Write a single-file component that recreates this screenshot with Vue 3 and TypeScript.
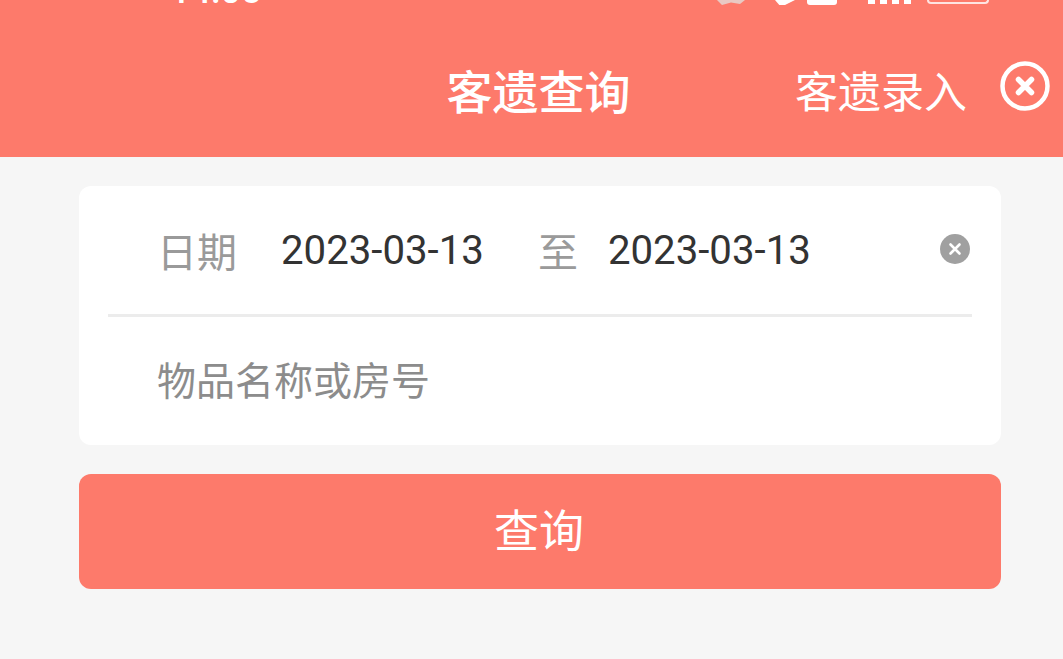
<script setup lang="ts">
const title = '客遗查询'
</script>

<template>
  <div class="page">
    <header class="header">
      <div class="status">
        <span class="time">14:05</span>
        <div class="status-icons">
          <svg class="bell" width="28" height="6" viewBox="0 0 28 6"><path d="M0 0 H28 L23 4 L14 2.5 L5 5Z" fill="#e9c9c3"/></svg>
          <svg class="wifi" width="20" height="7" viewBox="0 0 20 7"><path d="M0 0H20L6 7Z" fill="#fff"/></svg>
          <span class="sim"></span>
          <span class="bars"><i></i><i></i><i></i><i></i></span>
          <span class="battery"></span>
        </div>
      </div>
      <div class="nav">
        <h1 class="title">{{ title }}</h1>
        <span class="entry">客遗录入</span>
        <svg class="close" width="52" height="52" viewBox="0 0 52 52">
          <circle cx="26" cy="26" r="22.5" fill="none" stroke="#fff" stroke-width="4.5"/>
          <path d="M19.5 19.5 L32.5 32.5 M32.5 19.5 L19.5 32.5" stroke="#fff" stroke-width="5.5" stroke-linecap="round"/>
        </svg>
      </div>
    </header>
    <main class="content">
      <section class="card">
        <div class="row date-row">
          <span class="label">日期</span>
          <span class="date">2023-03-13</span>
          <span class="to">至</span>
          <span class="date">2023-03-13</span>
          <svg class="clear" width="30" height="30" viewBox="0 0 30 30">
            <circle cx="15" cy="15" r="15" fill="#a0a0a0"/>
            <path d="M10.5 10.5 L19.5 19.5 M19.5 10.5 L10.5 19.5" stroke="#fff" stroke-width="2.6" stroke-linecap="round"/>
          </svg>
        </div>
        <div class="row search-row">物品名称或房号</div>
      </section>
      <button class="query">查询</button>
    </main>
  </div>
</template>

<style>
html, body { margin: 0; background: #f6f6f6; }
</style>

<style scoped>
.page {
  width: 1063px;
  height: 659px;
  overflow: hidden;
  background: #f6f6f6;
  font-family: "Noto Sans CJK SC", "Noto Sans", sans-serif;
}
.header { height: 157px; background: #fd7a6b; overflow: hidden; }
.status {
  height: 5px;
  position: relative;
  overflow: hidden;
}
.time {
  position: absolute;
  left: 170px;
  bottom: -4px;
  color: #fff;
  font: 500 36px/36px Roboto, sans-serif;
}
.status-icons {
  position: absolute;
  left: 717px;
  top: 0;
  display: flex;
  align-items: flex-start;
}
.wifi { margin-left: 30px; }
.sim { width: 30px; height: 5px; margin-left: 12px; background: #fff; border-radius: 0 0 3px 3px; }
.bars { display: flex; gap: 5px; width: 44px; margin-left: 31px; }
.bars i { width: 7px; height: 4px; background: #fff; }
.battery {
  width: 58px; height: 2px;
  margin-left: 15px;
  border: 2px solid #fff; border-top: 0;
  border-radius: 0 0 6px 6px;
  opacity: .8;
}
.nav {
  height: 152px;
  position: relative;
  display: flex;
  align-items: center;
  justify-content: center;
  padding: 15px 0 0 14px;
  box-sizing: border-box;
  color: #fff;
}
.title { margin: 0; font-size: 46px; line-height: 60px; font-weight: 500; }
.entry {
  position: absolute;
  left: 795px;
  top: 54px;
  font-size: 43px;
  line-height: 60px;
  font-weight: 400;
}
.close { position: absolute; left: 999px; top: 55px; }
.content { padding: 29px 62px 0 79px; }
.card {
  background: #fff;
  border-radius: 12px;
  height: 259px;
  padding: 0 29px;
  box-sizing: border-box;
}
.row { display: flex; align-items: center; }
.date-row {
  height: 131px;
  border-bottom: 3px solid #ececec;
  padding: 0 2px 0 49px;
  box-sizing: border-box;
  font-size: 36px;
}
.label { color: #9a9a9a; width: 124px; font-size: 40px; }
.date { color: #333; font-family: Roboto, sans-serif; font-size: 40.2px; white-space: nowrap; }
.to { color: #9a9a9a; margin: 0 30px 0 54px; font-size: 40px; }
.clear { margin-left: auto; margin-top: -3px; }
.search-row {
  height: 128px;
  padding: 0 0 6px 49px;
  box-sizing: border-box;
  color: #8c8c8c;
  font-size: 39px;
}
.query {
  display: block;
  width: 100%;
  height: 115px;
  margin-top: 29px;
  padding: 0 2px 6px 0;
  border: 0;
  border-radius: 12px;
  background: #fd7a6b;
  color: #fff;
  font-family: inherit;
  font-size: 45px;
}
</style>
